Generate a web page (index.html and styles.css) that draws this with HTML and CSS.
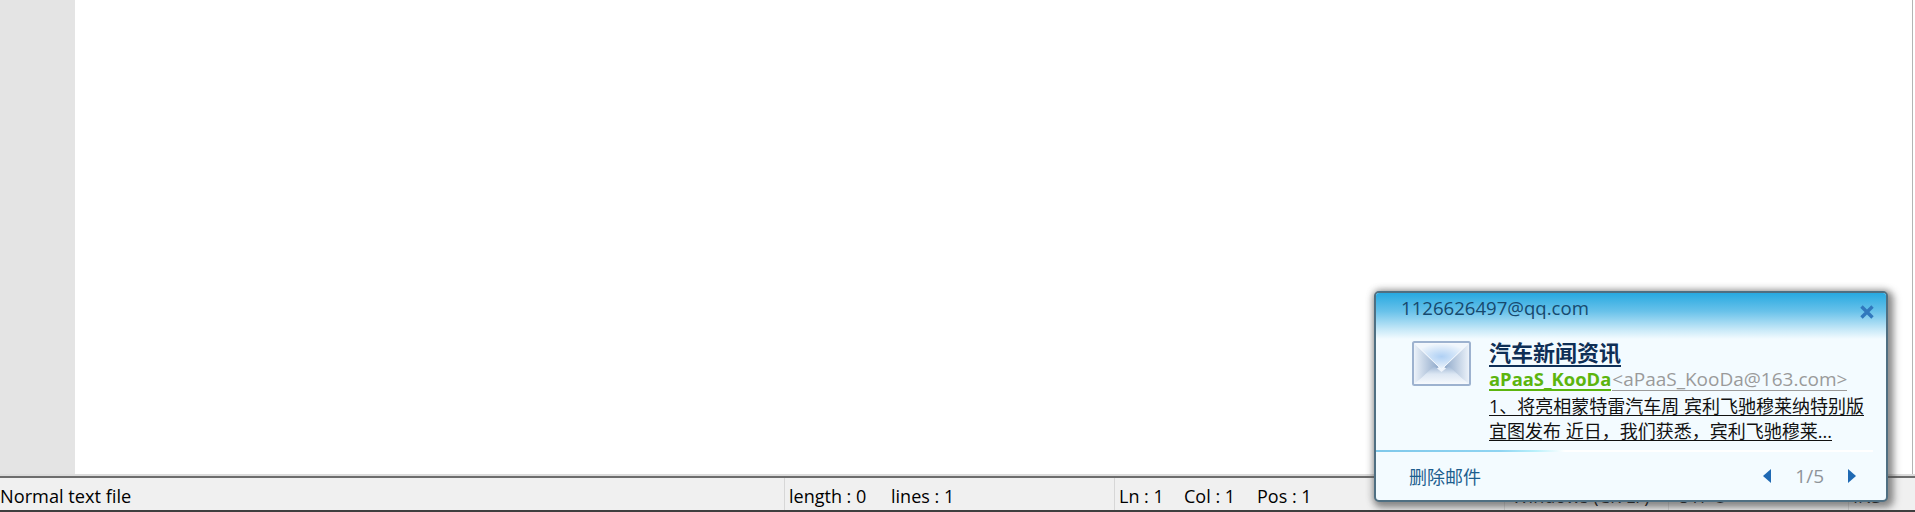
FILE: index.html
```html
<!DOCTYPE html>
<html lang="zh">
<head>
<meta charset="utf-8">
<title>Notepad</title>
<link rel="stylesheet" href="styles.css">
</head>
<body>
<div class="app">
  <div class="editor">
    <div class="gutter"></div>
    <div class="page"></div>
  </div>
  <div class="status">
    <div class="seg seg-type">Normal text file</div>
    <div class="seg seg-len"><span class="f-len">length : 0</span><span>lines : 1</span></div>
    <div class="seg seg-pos"><span class="f-ln">Ln : 1</span><span class="f-col">Col : 1</span><span>Pos : 1</span></div>
    <div class="seg seg-eol">Windows (CR LF)</div>
    <div class="seg seg-enc">UTF-8</div>
    <div class="seg seg-ins">INS</div>
  </div>
</div>
<div class="popup">
  <div class="pop-head">
    <span class="account">1126626497@qq.com</span>
    <svg class="close" width="16" height="16" viewBox="0 0 16 16"><path d="M2.500 2.500 13.500 13.500M13.500 2.500 2.500 13.500" stroke="#3178bd" stroke-width="3.400" fill="none"/></svg>
  </div>
  <div class="pop-body">
    <svg class="envelope" width="60" height="47" viewBox="0 0 60 47">
      <defs>
        <radialGradient id="envGlow" cx="0.5" cy="0.5" r="0.5"><stop offset="0" stop-color="#afd0f4"/><stop offset="1" stop-color="#f0f6fc"/></radialGradient>
        <linearGradient id="envSide" x1="0" y1="0" x2="1" y2="0"><stop offset="0" stop-color="#e9f0f8"/><stop offset="1" stop-color="#8ea8c9"/></linearGradient>
        <linearGradient id="envSideR" x1="1" y1="0" x2="0" y2="0"><stop offset="0" stop-color="#e9f0f8"/><stop offset="1" stop-color="#8ea8c9"/></linearGradient>
        <linearGradient id="envBot" x1="0" y1="1" x2="0" y2="0"><stop offset="0" stop-color="#f6f9fd"/><stop offset="0.55" stop-color="#dce7f3"/><stop offset="1" stop-color="#9db5d3"/></linearGradient>
      </defs>
      <rect x="1" y="1" width="57" height="43" rx="1.500" fill="#eef4fb" stroke="#9db2cf" stroke-width="2"/>
      <path d="M2.500 3 27 26 2.500 42Z" fill="url(#envSide)"/>
      <path d="M56.500 3 32 26 56.500 42Z" fill="url(#envSideR)"/>
      <path d="M3 43 22 25 29.500 31 37 25 56 43Z" fill="url(#envBot)"/>
      <path d="M3 2.500H56L29.500 28.500Z" fill="url(#envGlow)" stroke="#f4f8fd" stroke-width="1"/>
    </svg>
    <div class="msg">
      <div class="subject">汽车新闻资讯</div>
      <div class="from"><span class="name">aPaaS_KooDa</span><span class="addr">&lt;aPaaS_KooDa@163.com&gt;</span></div>
      <div class="text">1、将亮相蒙特雷汽车周 宾利飞驰穆莱纳特别版</div>
      <div class="text">宜图发布 近日，我们获悉，宾利飞驰穆莱...</div>
    </div>
  </div>
  <div class="rule"></div>
  <div class="pop-foot">
    <span class="del">删除邮件</span>
    <div class="pager">
      <svg class="arrow" width="8" height="14" viewBox="0 0 8 14"><path d="M8 0V14L0 7Z" fill="#1f69b3"/></svg>
      <span class="count">1/5</span>
      <svg class="arrow" width="8" height="14" viewBox="0 0 8 14"><path d="M0 0V14L8 7Z" fill="#1f69b3"/></svg>
    </div>
  </div>
</div>
</body>
</html>
```
FILE: styles.css
```css
html, body {
  margin: 0;
  padding: 0;
  width: 1915px;
  height: 512px;
  overflow: hidden;
  background: #fff;
}
.app {
  display: flex;
  flex-direction: column;
  width: 1915px;
  height: 512px;
  font-family: "Open Sans", "Noto Sans CJK SC", sans-serif;
}
.editor {
  flex: 1;
  display: flex;
  min-height: 0;
  border-bottom: 2px solid #dcdcdc;
}
.gutter {
  width: 75px;
  background: #e4e4e4;
}
.page {
  flex: 1;
  background: #fff;
  border-right: 1px solid #b4b4b4;
  margin-right: 2px;
}
.status {
  height: 36px;
  flex: none;
  box-sizing: border-box;
  display: flex;
  background: #f0f0f0;
  border-top: 2px solid #6d6d6d;
  border-bottom: 2px solid #3f3f3f;
  font-size: 18px;
  line-height: 36px;
  color: #000;
}
.seg {
  box-sizing: border-box;
  border-right: 1px solid #d7d7d7;
  padding-left: 4px;
  white-space: nowrap;
  overflow: hidden;
}
.f-len { display: inline-block; width: 102px; }
.f-ln { display: inline-block; width: 65px; }
.f-col { display: inline-block; width: 73px; }
.seg-type { width: 785px; padding-left: 0; font-size: 18.200px; }
.seg-len { width: 330px; }
.seg-pos { width: 390px; }
.seg-eol { width: 164px; padding-left: 7px; }
.seg-enc { width: 180px; padding-left: 8px; }
.seg-ins { flex: 1; border-right: 0; }
.popup {
  position: absolute;
  left: 1374px;
  top: 291px;
  width: 514px;
  height: 211px;
  box-sizing: border-box;
  display: flex;
  flex-direction: column;
  border: 2px solid #4f6f82;
  border-radius: 5px;
  background: #f3fbff;
  box-shadow: 3px 3px 7px 3px rgba(60, 60, 60, .5), 0 0 6px 2px rgba(120, 120, 120, .3);
  font-family: "Open Sans", "Noto Sans CJK SC", sans-serif;
}
.pop-head {
  height: 46px;
  flex: none;
  display: flex;
  justify-content: space-between;
  align-items: flex-start;
  padding: 0 11px 0 25px;
  background: linear-gradient(#27a9e1 0, #69c2ea 40%, #c8e9f8 80%, #f3fbff 100%);
  border-radius: 3px 3px 0 0;
}
.account {
  font-size: 18.600px;
  line-height: 30px;
  color: #17496e;
}
.close { margin-top: 11px; }
.pop-body {
  flex: 1;
  display: flex;
  min-height: 0;
  padding-left: 36px;
}
.envelope { margin-top: 2px; flex: none; }
.msg {
  margin-left: 17px;
  margin-top: 1px;
  display: flex;
  flex-direction: column;
  align-items: flex-start;
}
.subject {
  font-size: 22px;
  line-height: 25px;
  font-weight: 700;
  color: #0f2f56;
  border-bottom: 2px solid #0f2f56;
}
.from {
  display: flex;
  line-height: 18px;
  height: 24px;
  box-sizing: border-box;
}
.name {
  padding-top: 3px;
  font-size: 18.400px;
  font-weight: 700;
  color: #5cb50e;
  border-bottom: 2px solid #5cb50e;
}
.addr {
  padding-top: 3px;
  margin-left: 1px;
  font-size: 19px;
  color: #9a9a9a;
  border-bottom: 1px solid #9a9a9a;
}
.text {
  font-size: 18px;
  line-height: 18px;
  margin-top: 6px;
  color: #111;
  border-bottom: 1px solid #111;
}
.rule {
  height: 2px;
  margin: 0 13px 0 0;
  flex: none;
  background: linear-gradient(90deg, #7fc8ea 0, #8fd4f2 25%, #b8f0fb 32%, #ffffff 38%, #ffffff 100%);
}
.pop-foot {
  height: 48px;
  flex: none;
  display: flex;
  justify-content: space-between;
  align-items: center;
  padding: 0 30px 0 33px;
}
.del {
  font-size: 18px;
  color: #1d5e8e;
  font-family: "Noto Sans CJK SC", sans-serif;
}
.pager {
  display: flex;
  align-items: center;
  gap: 24px;
}
.count {
  font-size: 19px;
  color: #8f9499;
}
```
